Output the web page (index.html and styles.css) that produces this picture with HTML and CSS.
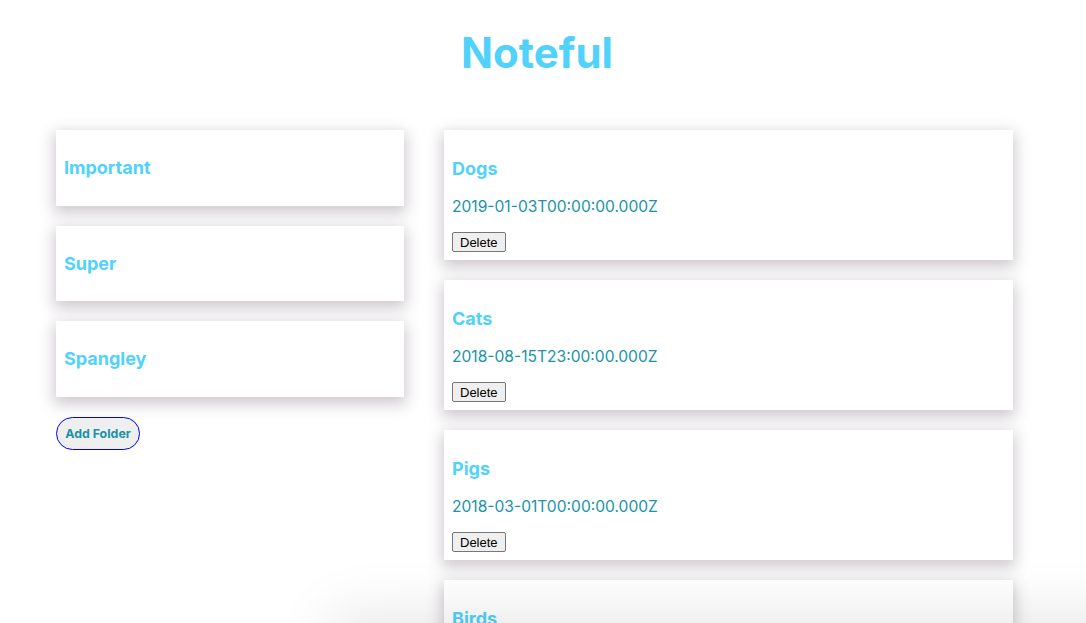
FILE: index.html
```html
<!DOCTYPE html>
<html lang="en">
<head>
<meta charset="utf-8">
<title>Noteful</title>
<link rel="stylesheet" href="styles.css">
</head>
<body>
<header class="header">
  <h1 class="title">Noteful</h1>
</header>
<div class="layout">
  <nav class="sidebar">
    <div class="folder"><h3 class="folder-name">Important</h3></div>
    <div class="folder"><h3 class="folder-name">Super</h3></div>
    <div class="folder"><h3 class="folder-name">Spangley</h3></div>
    <button class="add-folder">Add Folder</button>
  </nav>
  <main class="notes">
    <div class="note">
      <h3 class="note-name">Dogs</h3>
      <p class="note-date">2019-01-03T00:00:00.000Z</p>
      <button class="delete">Delete</button>
    </div>
    <div class="note">
      <h3 class="note-name">Cats</h3>
      <p class="note-date">2018-08-15T23:00:00.000Z</p>
      <button class="delete">Delete</button>
    </div>
    <div class="note">
      <h3 class="note-name">Pigs</h3>
      <p class="note-date">2018-03-01T00:00:00.000Z</p>
      <button class="delete">Delete</button>
    </div>
    <div class="note">
      <h3 class="note-name">Birds</h3>
      <p class="note-date">2019-01-04T00:00:00.000Z</p>
      <button class="delete">Delete</button>
    </div>
  </main>
</div>
<div class="bottom-shade"></div>
</body>
</html>
```

FILE: styles.css
```css
html, body {
  margin: 0;
  padding: 0;
  background: #ffffff;
  font-family: Inter, "Noto Sans", sans-serif;
}

.header {
  padding: 26px 12px 0 0;
  text-align: center;
}

.title {
  margin: 0;
  font-size: 42px;
  line-height: 53px;
  font-weight: 700;
  color: #50d2fd;
}

.layout {
  display: grid;
  grid-template-columns: 348px 569px;
  column-gap: 40px;
  padding: 51px 0 0 56px;
}

.sidebar {
  display: flex;
  flex-direction: column;
  align-items: flex-start;
  gap: 20px;
}

.folder {
  align-self: stretch;
  background: #fff;
  padding: 8px;
  box-shadow: 0 5px 14px 2px rgba(80, 60, 80, 0.28);
}

.folder-name,
.note-name {
  font-size: 18px;
  font-weight: 700;
  color: #50d2fd;
}

.folder-name {
  margin: 18px 0;
  line-height: 23.5px;
}

.note-name {
  margin: 19px 0 17px;
  line-height: 23px;
}

.add-folder {
  height: 33px;
  width: 84px;
  padding: 0;
  border: 1px solid #0000ff;
  border-radius: 17px;
  background: #efefef;
  color: #1a92a8;
  font-family: Inter, "Noto Sans", sans-serif;
  font-size: 12.4px;
  font-weight: 700;
}

.notes {
  display: flex;
  flex-direction: column;
  gap: 20px;
}

.note {
  background: #fff;
  padding: 8px;
  box-shadow: 0 5px 14px 2px rgba(80, 60, 80, 0.28);
}

.note-date {
  margin: 16px 0;
  font-size: 15.6px;
  line-height: 19px;
  color: #1a93aa;
}

.delete {
  display: block;
  font-family: "Liberation Sans", Arial, sans-serif;
  font-size: 13px;
  height: 20px;
  padding: 0 7px;
  border: 1px solid #767676;
  border-radius: 2px;
  background: #efefef;
  color: #000;
}

.bottom-shade {
  position: fixed;
  left: 340px;
  right: -60px;
  bottom: -90px;
  height: 90px;
  background: #fff;
  box-shadow: 0 0 60px 8px rgba(0, 0, 0, 0.1);
}
```
